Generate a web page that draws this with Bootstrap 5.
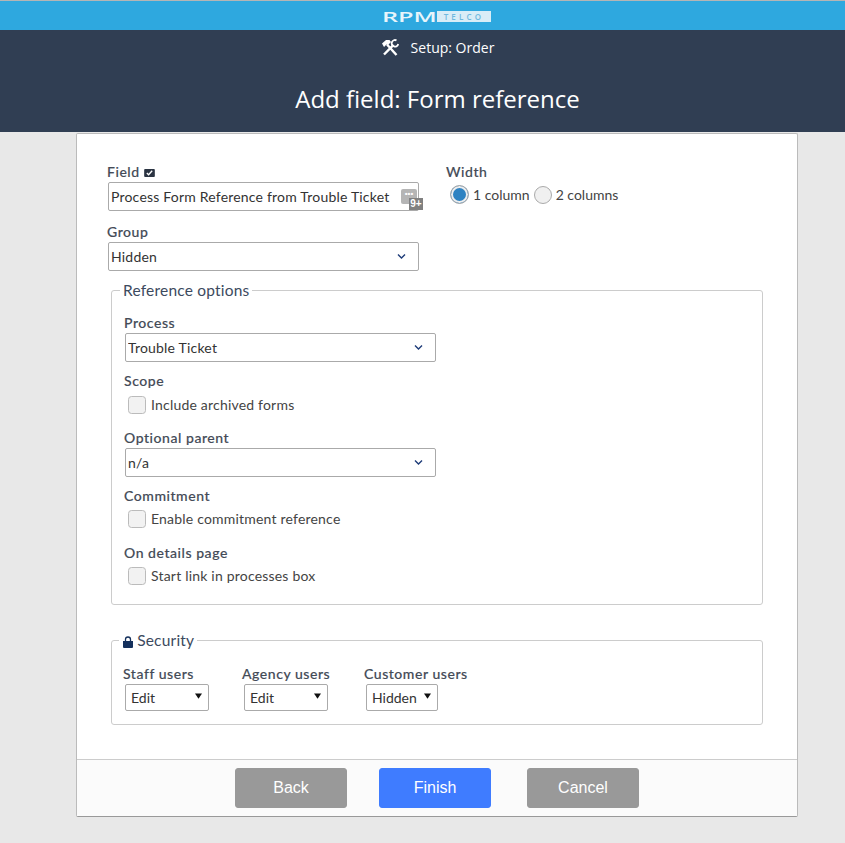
<!doctype html>
<html lang="en"><head><meta charset="utf-8"><title>Add field</title>
<link rel="stylesheet" href="https://cdn.jsdelivr.net/npm/bootstrap@5.3.0/dist/css/bootstrap.min.css">
<style>
html,body{height:100%}
body{background:#e8e8e8;font-family:"Lato","Liberation Sans",sans-serif;font-size:14px;color:#333;overflow:hidden}
.top-line{height:1px;background:#b5b5b5}
.logo-bar{height:29px;background:#2ea8df;color:#e8f5fb;padding:1px 0 0 30px}
.logo-rpm{font:600 15px/1 "Open Sans",sans-serif;width:55px;margin-left:-2px;display:inline-block;transform-origin:left center;transform:scaleX(1.68);white-space:nowrap}
.logo-tag{width:54px;height:11px;background:#d9edf7;color:#6fb9de;font:600 8px/11px "Open Sans",sans-serif;letter-spacing:3.2px;text-align:center}
.head-band{height:102px;background:#303e53;color:#fff;padding-left:30px}
.setup-line{height:35px;font:14px "Open Sans",sans-serif;gap:12px}
.page-title{font:500 24px/1 "Open Sans",sans-serif;margin:0;padding-top:22px;text-align:center}
.sheet{width:722px;height:684px;margin:1px 0 0 76px;background:#fff;border:1px solid #bbb;border-bottom-color:#999;border-radius:2px}
.sheet-body{height:625px;padding:29px 34px 0 30px}
.sheet-foot{height:57px;background:#fbfbfb;border-top:1px solid #ccc;gap:32px;padding-top:8px}
.fld-label{display:block;font-size:14px;font-weight:500;color:#444b57;line-height:17px;margin:0 0 2px;letter-spacing:.55px;-webkit-text-stroke:.15px #444b57}
.fld-input,.fld-select{width:311px;height:29px;margin-left:1px;font-size:14px;padding:0 2px;border:1px solid #aaa;border-radius:2px;color:#333;letter-spacing:.2px;background-color:#fff;box-shadow:none}
.fld-select{background-position:right 12px center;background-size:9px 7px;background-image:url("data:image/svg+xml,%3Csvg xmlns='http://www.w3.org/2000/svg' viewBox='0 0 9 7'%3E%3Cpath d='M1 1.500 4.500 5 8 1.500' fill='none' stroke='%231d3b78' stroke-width='1.400'/%3E%3C/svg%3E")}
.more-btn{right:2px;top:7px;width:16px;height:15px;background:#b5b5b5;border-radius:2px;color:#fff;font:700 8px/10px "Liberation Sans",sans-serif;text-align:center}
.more-count{left:302px;top:16px;width:14px;height:12px;background:#808080;color:#fff;font:700 10px/12px "Liberation Sans",sans-serif;text-align:center}
.width-col{margin-left:27px}
.radio-row{margin-top:4px}
.radio-dot{width:18px;height:18px;margin:0 4px 0 0;flex:none;border:1px solid #aaa;background-color:#f0f0f0}
.radio-ring{width:19px;height:19px;border-radius:50%;border:1px solid #aaa;background:#2f83c2;box-shadow:inset 0 0 0 2px #eee}
.opt-text{font-size:14px;color:#444;letter-spacing:.2px}
.radio-text{letter-spacing:0}
.opt-box{width:18px;height:18px;margin:0 5px 0 0;flex:none;border:1px solid #bbb;border-radius:3px;background-color:#f2f2f2}
.group-box{margin-left:4px;width:652px;border:1px solid #ccc;border-radius:3px}
.group-title{float:none;width:auto;font-size:15.5px;line-height:20px;margin:0 0 0 -4px;padding:0 3px;color:#3c4a5e;letter-spacing:.2px}
.ref-box{height:325px;padding:0 12px;margin-top:9px}
.sec-box{height:95px;padding:0 11px;margin-top:25px}
.sec-title{padding-left:4px}
.group-label{margin-top:12px}
.first-head{margin-top:14px}
.scope-head{margin-top:10px}
.commit-head{margin-top:10px}
.group-gap{margin-top:14px}
.details-gap{margin-top:15px}
.scope-row{margin-top:5px}
.check-row{margin-top:4px}
.sec-row{margin-top:15px}.sec-col1{width:119px}.sec-col2{width:122px}
.sel84{width:84px}.sel72{width:72px}
.mini-select{height:27px;font-size:14px;padding:0 5px;margin-left:2px;border:1px solid #aaa;border-radius:2px;color:#333;background-color:#fff;background-position:right 6px top 8px;background-size:7px 6px;box-shadow:none}
.go-btn{width:112px;height:40px;font:16px "Liberation Sans",sans-serif;color:#fff;border-radius:3px;padding:0}
.go-gray{background:#999;border:1px solid #999}
.go-blue{background:#3f7cff;border:1px solid #3f7cff}
.go-last{margin-left:4px}
.arrow-tri{background-image:url("data:image/svg+xml,%3Csvg xmlns='http://www.w3.org/2000/svg' viewBox='0 0 8 6'%3E%3Cpath d='M0 0h8L4 6z' fill='%23111'/%3E%3C/svg%3E")}
</style></head><body>
<div class="top-line"></div>
<div class="logo-bar d-flex align-items-center justify-content-center">
 <div class="d-flex align-items-center"><span class="logo-rpm">RPM</span><div class="logo-tag">TELCO</div></div>
</div>
<header class="head-band">
 <div class="setup-line d-flex align-items-center justify-content-center">
  <svg width="18" height="18" viewBox="0 0 18 18" fill="#fff" aria-hidden="true"><path d="M1 4.500 5 1h3.500L10 3 7 6 5.500 5.500 3 8z"/><path d="M6 5.500 15.500 16" stroke="#fff" stroke-width="2.400" fill="none"/><path d="M12.500 5.800 3 15.500" stroke="#fff" stroke-width="2.400" fill="none"/><path d="M15.500 1.400A3.300 3.300 0 1 0 17.200 5" stroke="#fff" stroke-width="1.800" fill="none"/></svg>
  <span>Setup: Order</span>
 </div>
 <h1 class="page-title">Add field: Form reference</h1>
</header>
<main class="sheet">
 <form>
 <div class="sheet-body">
  <div class="d-flex">
   <div>
    <label class="fld-label">Field <svg width="11" height="8" viewBox="0 0 12 9" aria-hidden="true"><rect width="12" height="9" rx="1" fill="#2b3442"/><path d="M3 4.500 5 6.500 9 2" stroke="#fff" stroke-width="1.500" fill="none"/></svg></label>
    <div class="position-relative">
     <input class="form-control fld-input" value="Process Form Reference from Trouble Ticket">
     <div class="position-absolute more-btn">•••</div>
     <div class="position-absolute more-count">9+</div>
    </div>
    <label class="fld-label group-label">Group</label>
    <select class="form-select fld-select"><option>Hidden</option></select>
   </div>
   <div class="width-col">
    <div class="fld-label">Width</div>
    <div class="d-flex align-items-center ms-1 opt-text radio-text radio-row">
     <span class="radio-ring me-1"></span><span class="me-1">1 column</span>
     <input class="form-check-input radio-dot" type="radio" name="w" aria-label="2 columns"><span>2 columns</span>
    </div>
   </div>
  </div>
  <fieldset class="group-box ref-box">
   <legend class="group-title">Reference options</legend>
   <label class="fld-label first-head">Process</label>
   <select class="form-select fld-select"><option>Trouble Ticket</option></select>
   <div class="fld-label scope-head">Scope</div>
   <div class="d-flex align-items-center ms-1 opt-text scope-row"><input class="form-check-input opt-box" type="checkbox" id="c1"><label for="c1">Include archived forms</label></div>
   <label class="fld-label group-gap">Optional parent</label>
   <select class="form-select fld-select"><option>n/a</option></select>
   <div class="fld-label commit-head">Commitment</div>
   <div class="d-flex align-items-center ms-1 opt-text check-row"><input class="form-check-input opt-box" type="checkbox" id="c2"><label for="c2">Enable commitment reference</label></div>
   <div class="fld-label details-gap">On details page</div>
   <div class="d-flex align-items-center ms-1 opt-text check-row"><input class="form-check-input opt-box" type="checkbox" id="c3"><label for="c3">Start link in processes box</label></div>
  </fieldset>
  <fieldset class="group-box sec-box">
   <legend class="group-title sec-title"><svg width="10" height="12" viewBox="0 0 10 12" aria-hidden="true"><path d="M0 5h10v6a1 1 0 0 1-1 1H1a1 1 0 0 1-1-1z" fill="#14305c"/><path d="M2.500 5V3.500a2.500 2.500 0 0 1 5 0V5" fill="none" stroke="#14305c" stroke-width="1.300"/></svg> Security</legend>
   <div class="d-flex sec-row">
    <div class="sec-col1"><label class="fld-label">Staff users</label><select class="form-select mini-select arrow-tri sel84"><option>Edit</option></select></div>
    <div class="sec-col2"><label class="fld-label">Agency users</label><select class="form-select mini-select arrow-tri sel84"><option>Edit</option></select></div>
    <div><label class="fld-label">Customer users</label><select class="form-select mini-select arrow-tri sel72"><option>Hidden</option></select></div>
   </div>
  </fieldset>
 </div>
 <div class="sheet-foot d-flex justify-content-center">
  <button type="button" class="btn go-btn go-gray">Back</button>
  <button type="button" class="btn go-btn go-blue">Finish</button>
  <button type="button" class="btn go-btn go-gray go-last">Cancel</button>
 </div>
 </form>
</main>
</body></html>
